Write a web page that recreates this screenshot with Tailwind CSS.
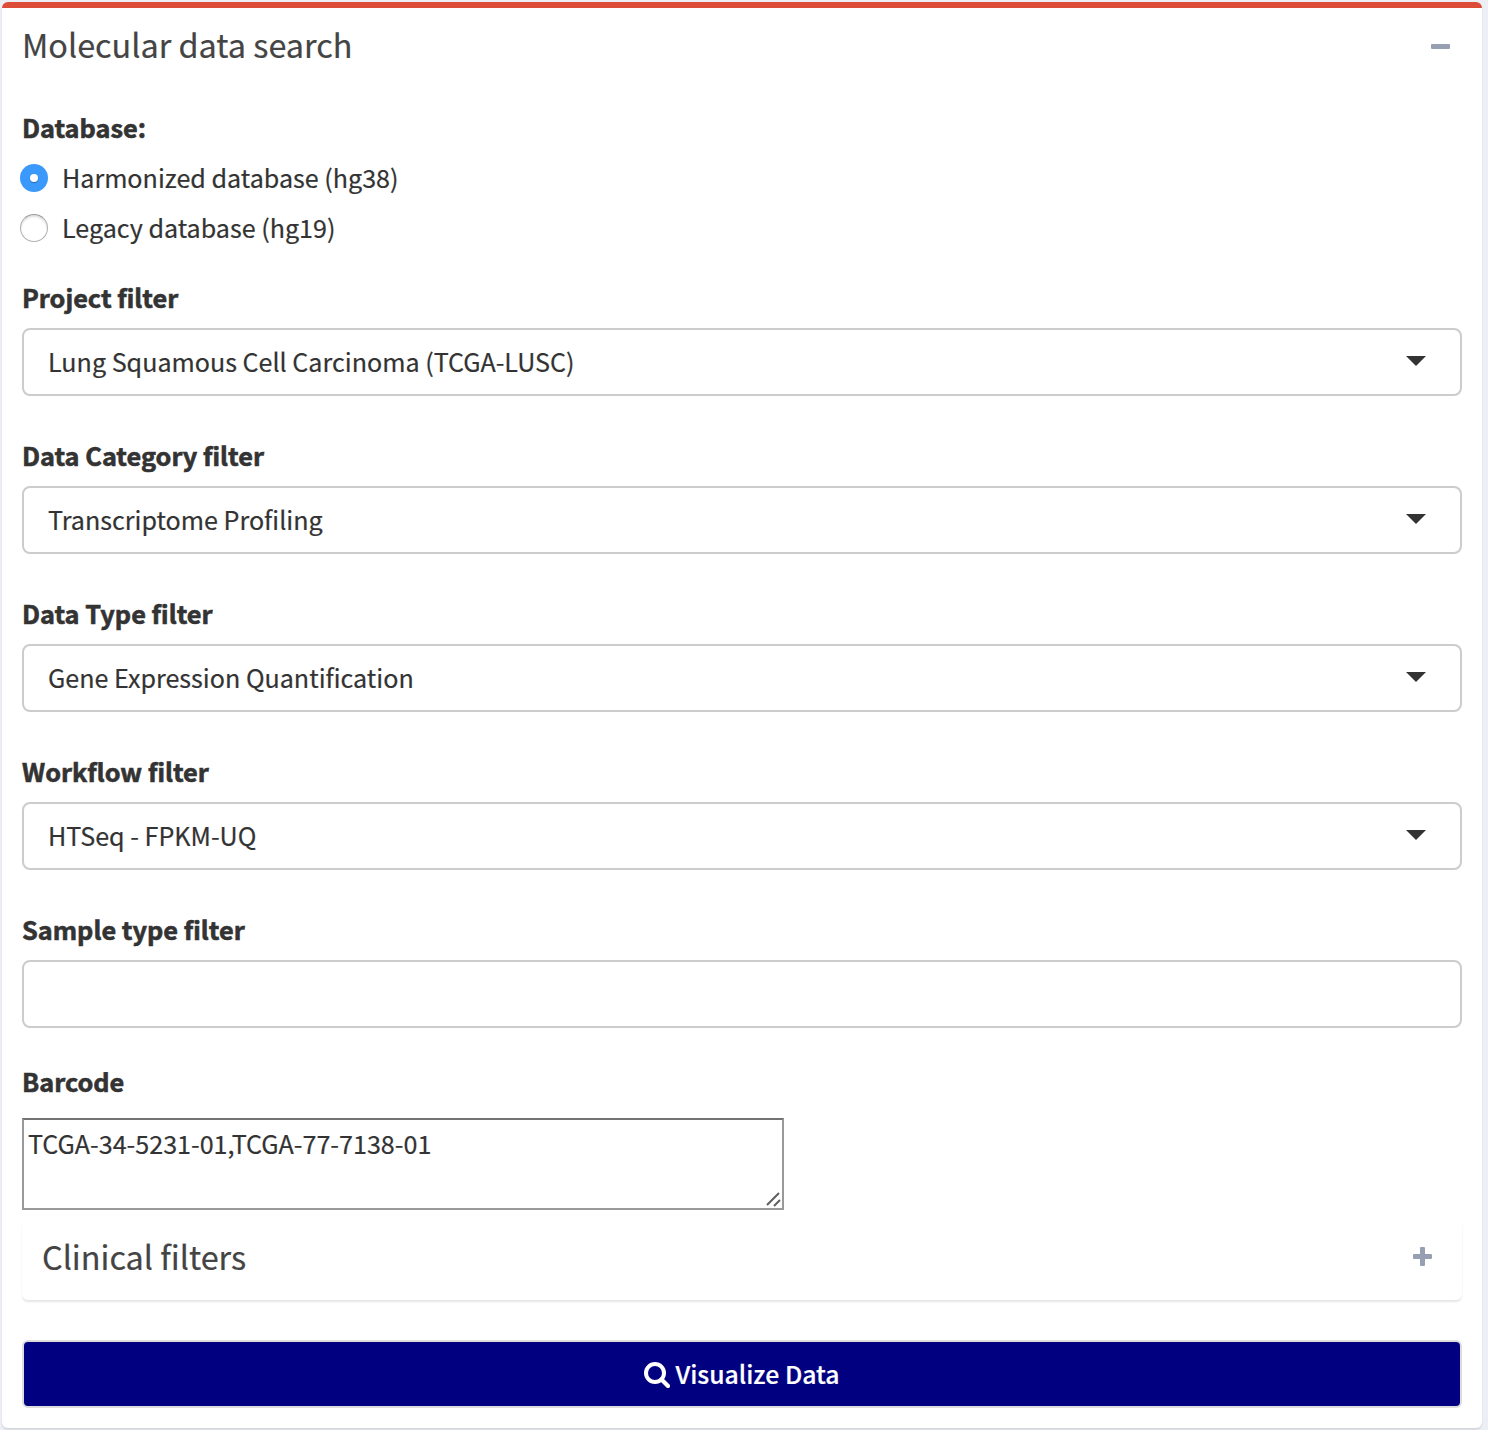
<!DOCTYPE html>
<html lang="en">
<head>
<meta charset="utf-8">
<title>Molecular data search</title>
<script src="https://cdn.jsdelivr.net/npm/@tailwindcss/browser@4"></script>
</head>
<body class="bg-[#ecf0f5] h-[1430px] overflow-hidden pt-0.5 pl-0.5 font-['Noto_Sans_CJK_SC','Source_Sans_Pro',sans-serif] text-[25.1px] text-[#333] [-webkit-text-stroke:0.2px]">
<main class="w-[1480px] h-[1426px] bg-white rounded-[6px] border-t-[6px] border-[#dd4b39] shadow-[0_2px_2px_rgba(0,0,0,0.1)] px-5 flex flex-col">
  <header class="h-[99px] pt-4 flex justify-between items-start">
    <h1 class="h-10 leading-10 text-[32.4px] text-[#444] whitespace-nowrap">Molecular data search</h1>
    <button class="h-11 pr-3 flex items-center" aria-label="Collapse"><span class="block w-[19px] h-[5px] rounded-[1px] bg-[#97a0b3]"></span></button>
  </header>

  <div class="h-10 leading-10 text-[25.3px] font-bold [-webkit-text-stroke:0.6px]">Database:</div>
  <div class="mt-1.5 -ml-0.5">
    <label class="h-[50px] flex items-center gap-[14px]">
      <span class="size-7 rounded-full bg-[#3b99fc] flex items-center justify-center"><span class="size-2 rounded-full bg-white shadow-[0_1px_1px_rgba(0,0,0,0.3)]"></span></span>
      <span>Harmonized database (hg38)</span>
    </label>
    <label class="h-[50px] flex items-center gap-[14px]">
      <span class="size-7 rounded-full bg-white border border-[#b0b0b0] border-t-[#999] shadow-[inset_0_2px_2px_rgba(0,0,0,0.12)]"></span>
      <span>Legacy database (hg19)</span>
    </label>
  </div>

  <div class="mt-6 h-10 leading-10 text-[25.3px] font-bold [-webkit-text-stroke:0.6px]">Project filter</div>
  <div class="mt-[11px] h-[68px] shrink-0 border-2 border-[#ccc] rounded-lg pl-6 pr-[34px] flex items-center justify-between">
    <span>Lung Squamous Cell Carcinoma (TCGA-LUSC)</span>
    <svg class="w-5 h-2.5 -mt-0.5" viewBox="0 0 20 10"><path d="M0 0h20L10 10z" fill="#333"/></svg>
  </div>

  <div class="mt-[39px] h-10 leading-10 text-[25.3px] font-bold [-webkit-text-stroke:0.6px]">Data Category filter</div>
  <div class="mt-[11px] h-[68px] shrink-0 border-2 border-[#ccc] rounded-lg pl-6 pr-[34px] flex items-center justify-between">
    <span>Transcriptome Profiling</span>
    <svg class="w-5 h-2.5 -mt-0.5" viewBox="0 0 20 10"><path d="M0 0h20L10 10z" fill="#333"/></svg>
  </div>

  <div class="mt-[39px] h-10 leading-10 text-[25.3px] font-bold [-webkit-text-stroke:0.6px]">Data Type filter</div>
  <div class="mt-[11px] h-[68px] shrink-0 border-2 border-[#ccc] rounded-lg pl-6 pr-[34px] flex items-center justify-between">
    <span>Gene Expression Quantification</span>
    <svg class="w-5 h-2.5 -mt-0.5" viewBox="0 0 20 10"><path d="M0 0h20L10 10z" fill="#333"/></svg>
  </div>

  <div class="mt-[39px] h-10 leading-10 text-[25.3px] font-bold [-webkit-text-stroke:0.6px]">Workflow filter</div>
  <div class="mt-[11px] h-[68px] shrink-0 border-2 border-[#ccc] rounded-lg pl-6 pr-[34px] flex items-center justify-between">
    <span>HTSeq - FPKM-UQ</span>
    <svg class="w-5 h-2.5 -mt-0.5" viewBox="0 0 20 10"><path d="M0 0h20L10 10z" fill="#333"/></svg>
  </div>

  <div class="mt-[39px] h-10 leading-10 text-[25.3px] font-bold [-webkit-text-stroke:0.6px]">Sample type filter</div>
  <div class="mt-[11px] h-[68px] shrink-0 border-2 border-[#ccc] rounded-lg"></div>

  <div class="mt-[33px] h-10 leading-10 text-[25.3px] font-bold [-webkit-text-stroke:0.6px]">Barcode</div>
  <div class="mt-[17px] w-[762px] h-[92px] shrink-0 border-2 border-[#999] border-t-[#737373] pl-1 pt-[3px] flex justify-between">
    <span class="h-10 leading-10">TCGA-34-5231-01,TCGA-77-7138-01</span>
    <svg class="size-4 self-end" viewBox="0 0 16 16" fill="none" stroke="#5f5f5f" stroke-width="2"><path d="M1 13 13 1M8 14l6-6"/></svg>
  </div>

  <section class="mt-[10px] h-20 shrink-0 rounded-[6px] shadow-[0_2px_2px_rgba(0,0,0,0.1)] pl-5 pr-[30px] pt-4 flex justify-between items-start">
    <h2 class="h-10 leading-10 text-[32.4px] text-[#444]">Clinical filters</h2>
    <button class="h-10 flex items-center" aria-label="Expand"><svg class="size-[19px]" viewBox="0 0 19 19" fill="#97a0b3"><rect x="0" y="7" width="19" height="5" rx="1"/><rect x="7" y="0" width="5" height="19" rx="1"/></svg></button>
  </section>

  <button class="mt-10 h-[68px] shrink-0 border-2 border-[#ddd] rounded-[6px] bg-[#000080] text-white text-[24.8px] font-medium flex items-center justify-center gap-[5px]">
    <svg class="size-[26px] mt-px" viewBox="0 0 26 26" fill="none" stroke="#fff"><circle cx="11" cy="11" r="9" stroke-width="4"/><path d="m17.500 17.500 6.500 6.500" stroke-width="4.200" stroke-linecap="round"/></svg>
    <span>Visualize Data</span>
  </button>
</main>
</body>
</html>
